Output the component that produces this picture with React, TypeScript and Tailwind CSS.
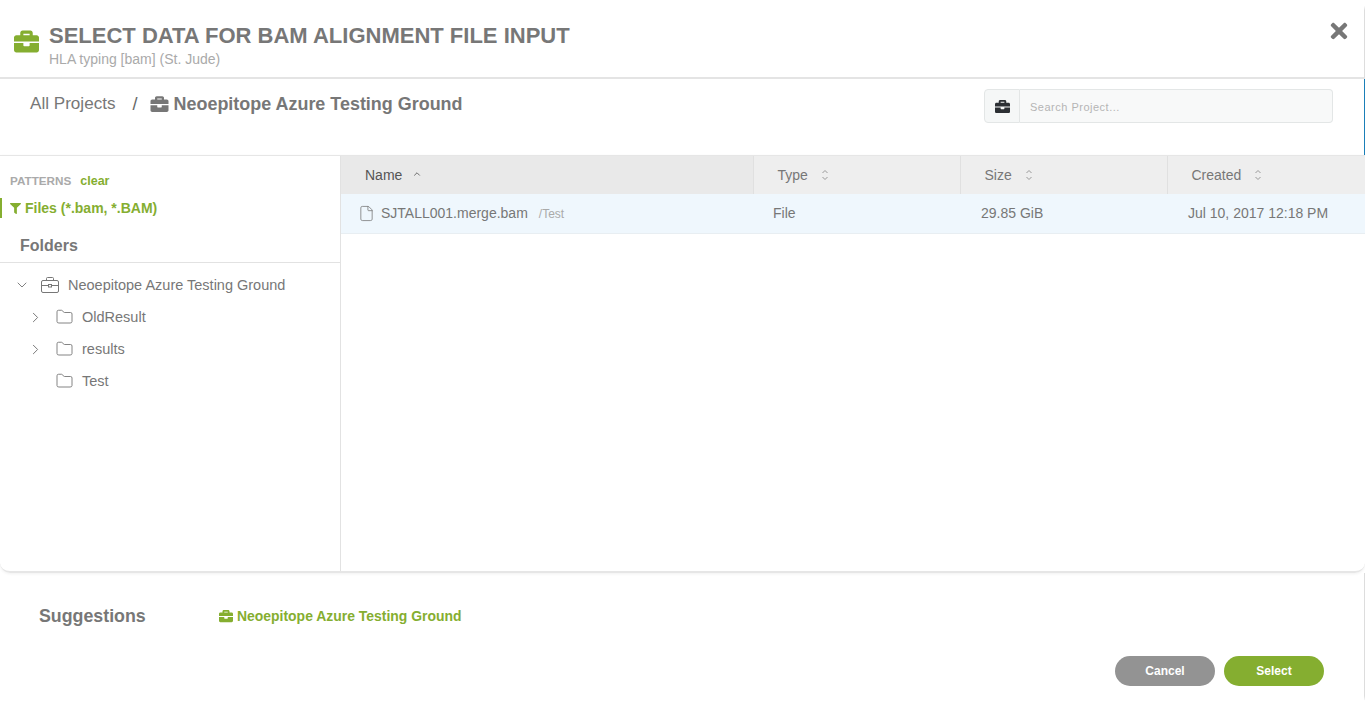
import React from 'react';
import { ChevronDown, ChevronRight, ChevronUp, File, Folder } from 'lucide-react';
import { FaBriefcase, FaFilter, FaTimes } from 'react-icons/fa';

const columns = ['Type', 'Size', 'Created'];

const OutlineCase = () => (
  <svg width="20" height="18" viewBox="0 0 20 18" fill="none" stroke="#777" strokeWidth="1">
    <rect x="1.5" y="4.5" width="17" height="12" rx="1.5" />
    <path d="M6.5 4.5V2.5a1 1 0 0 1 1-1h5a1 1 0 0 1 1 1v2" />
    <path d="M1.5 9.5h17" />
    <rect x="8.5" y="8.5" width="3" height="2.5" fill="#fff" />
  </svg>
);

const SortIcon = () => (
  <svg className="ml-[13px]" width="8" height="14" viewBox="0 0 8 14" fill="none" stroke="#999" strokeWidth="1">
    <path d="M1.5 5 4 2.5 6.5 5" />
    <path d="M1.5 9 4 11.5 6.5 9" />
  </svg>
);

const TreeRow = ({ label, arrow }: { label: string; arrow?: boolean }) => (
  <div className="flex h-[32px] items-center text-[14.5px] text-[#777]">
    <div className="flex w-[27px] justify-start">
      {arrow && <ChevronRight className="mb-[2px] ml-[-1px] h-[17px] w-[17px] text-[#777]" strokeWidth={1.4} />}
    </div>
    <Folder className="mb-[3px] h-[18px] w-[19px] text-[#777]" strokeWidth={1.2} />
    <span className="ml-[8px]">{label}</span>
  </div>
);

export default function App() {
  return (
    <div className="flex h-[706px] w-[1365px] flex-col overflow-hidden rounded-[10px] bg-white font-['Liberation_Sans',Arial,sans-serif]">
      <header className="flex h-[79px] shrink-0 items-start border-b-2 border-r border-b-[#e4e4e4] border-r-[#ddd] pl-[14px] pr-[15px]">
        <FaBriefcase className="mt-[29px] h-[25px] w-[25px] text-[#85ae30]" />
        <div className="ml-[10px] mt-[22px] flex-1">
          <h1 className="text-[22px] font-bold leading-[28px] text-[#777]">SELECT DATA FOR BAM ALIGNMENT FILE INPUT</h1>
          <p className="text-[14px] leading-[18px] text-[#aaa]">HLA typing [bam] (St. Jude)</p>
        </div>
        <FaTimes className="mt-[19px] h-[24px] w-[20px] text-[#777]" />
      </header>

      <div className="flex h-[76px] shrink-0 items-start justify-between border-r border-r-[#1a7fb8] pl-[30px] pr-[31px]">
        <div className="mt-[14px] flex items-center text-[17.1px] leading-[22px] text-[#777]">
          <span>All Projects</span>
          <span className="ml-[17px] text-[18px] text-[#666]">/</span>
          <FaBriefcase className="ml-[12px] h-[18px] w-[19px] text-[#777]" />
          <span className="ml-[5px] text-[17.95px] font-bold">Neoepitope Azure Testing Ground</span>
        </div>
        <div className="mt-[10px] flex h-[34px] w-[349px]">
          <div className="flex w-[36px] items-center justify-center rounded-l-[4px] border border-[#e3e6e6] bg-[#f5f7f7]">
            <FaBriefcase className="h-[15px] w-[15px] text-[#2b2f33]" />
          </div>
          <div className="flex flex-1 items-center rounded-r-[4px] border border-l-0 border-[#e3e6e6] bg-[#f8f9f9] pl-[10px] pt-[2px] text-[11px] tracking-[0.5px] text-[#b5b5b5]">
            Search Project...
          </div>
        </div>
      </div>

      <main className="flex h-[418px] shrink-0 overflow-hidden rounded-b-[10px] border-b-2 border-t border-[#e6e6e6] shadow-[0_1px_3px_rgba(0,0,0,0.06)]">
        <aside className="w-[341px] shrink-0 border-r border-[#e2e2e2]">
          <div className="flex items-center pl-[10px] pt-[18px] text-[11.7px] font-bold leading-[14px]">
            <span className="text-[#aaa]">PATTERNS</span>
            <span className="ml-[9px] text-[12.5px] text-[#85ae30]">clear</span>
          </div>
          <div className="mt-[10px] flex h-[20px] items-center border-l-2 border-[#85ae30] pl-[8px] text-[14px] font-bold text-[#85ae30]">
            <FaFilter className="h-[11px] w-[11px]" />
            <span className="ml-[4px]">Files (*.bam, *.BAM)</span>
          </div>
          <div className="mt-[15px] flex h-[30px] items-start border-b border-[#e2e2e2] pl-[20px] pt-[3px] text-[16px] font-bold leading-[20px] text-[#777]">
            Folders
          </div>
          <div className="pl-[14px] pt-[7px]">
            <div className="flex h-[32px] items-center text-[14.5px] text-[#777]">
              <ChevronDown className="mb-[2px] h-[16px] w-[16px]" strokeWidth={1.4} />
              <span className="mb-[3px] ml-[10px] flex"><OutlineCase /></span>
              <span className="ml-[8px]">Neoepitope Azure Testing Ground</span>
            </div>
            <div className="pl-[14px]">
              <TreeRow label="OldResult" arrow />
              <TreeRow label="results" arrow />
              <TreeRow label="Test" />
            </div>
          </div>
        </aside>

        <section className="min-w-0 flex-1">
          <div className="grid h-[38px] grid-cols-[413px_207px_207px_1fr] bg-[#eeeeee] text-[14px] text-[#777]">
            <div className="flex items-center border-r border-[#e0e0e0] bg-[#e9e9e9] pl-[24px] text-[#555]">
              Name
              <ChevronUp className="ml-[10px] mb-[3px] h-[10px] w-[10px]" strokeWidth={2} />
            </div>
            {columns.map((label) => (
              <div key={label} className="flex items-center border-r border-[#e0e0e0] pl-[23.5px] last:border-r-0">
                {label}
                <SortIcon />
              </div>
            ))}
          </div>
          <div className="grid h-[40px] grid-cols-[413px_207px_207px_1fr] items-center border-b border-[#e8eef2] bg-[#eff7fd] text-[14px] text-[#777]">
            <div className="flex items-center pl-[17px]">
              <File className="h-[17px] w-[17px]" strokeWidth={1.1} />
              <span className="ml-[6px]">SJTALL001.merge.bam</span>
              <span className="ml-[11px] text-[12px] text-[#aaa]">/Test</span>
            </div>
            <div className="pl-[19px]">File</div>
            <div className="pl-[20px]">29.85 GiB</div>
            <div className="pl-[20px]">Jul 10, 2017 12:18 PM</div>
          </div>
        </section>
      </main>

      <footer className="flex-1 border-r border-r-[#ddd]">
        <div className="flex items-center pl-[39px] pt-[32px]">
          <span className="w-[180px] text-[17.8px] font-bold leading-[22px] text-[#777]">Suggestions</span>
          <FaBriefcase className="h-[14px] w-[14px] text-[#85ae30]" />
          <span className="ml-[4px] text-[13.95px] font-bold text-[#85ae30]">Neoepitope Azure Testing Ground</span>
        </div>
        <div className="mt-[29px] flex justify-end gap-[9px] pr-[40px]">
          <button className="h-[30px] w-[100px] rounded-full bg-[#939393] text-[12px] font-bold text-white">Cancel</button>
          <button className="h-[30px] w-[100px] rounded-full bg-[#85ae30] text-[12px] font-bold text-white">Select</button>
        </div>
      </footer>
    </div>
  );
}
